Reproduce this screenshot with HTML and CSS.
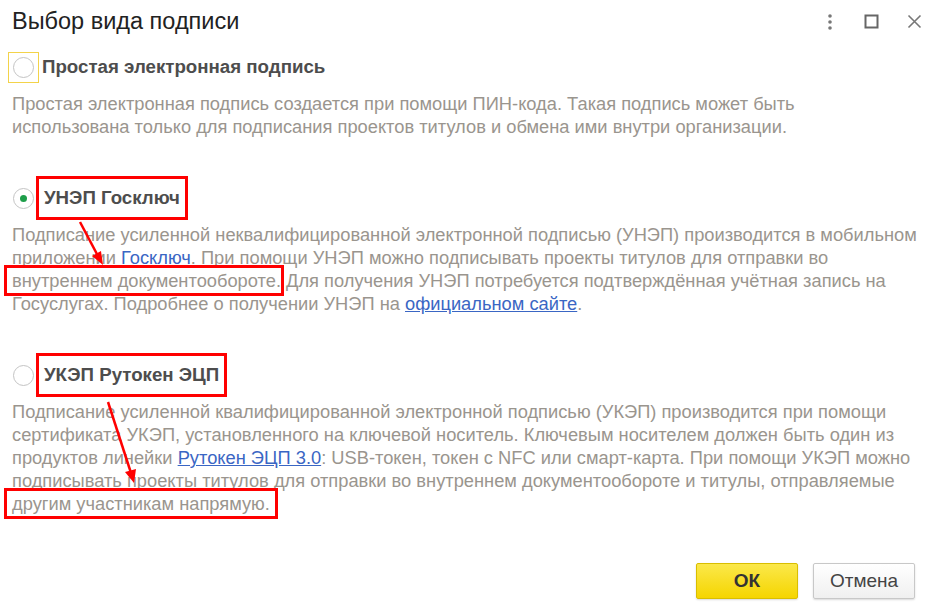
FILE: index.html
```html
<!DOCTYPE html>
<html lang="ru">
<head>
    <meta charset="UTF-8">
    <meta name="viewport" content="width=device-width, initial-scale=1.0">
    <title>Выбор вида подписи</title>
    <link rel="stylesheet" href="styles.css">
</head>
<body>
    <div class="ventana">
        <header class="cabecera">
            <h1 class="titulo">Выбор вида подписи</h1>
            <div class="iconos">
                <svg width="14" height="16" viewBox="0 0 14 16"><circle cx="7" cy="2" r="1.8" fill="#777"/><circle cx="7" cy="8" r="1.8" fill="#777"/><circle cx="7" cy="14" r="1.8" fill="#777"/></svg>
                <svg width="16" height="16" viewBox="0 0 16 16"><rect x="1.5" y="1.5" width="12" height="12" fill="none" stroke="#666" stroke-width="2"/></svg>
                <svg width="16" height="16" viewBox="0 0 16 16"><path d="M1.5 1.5 L13.5 13.5 M13.5 1.5 L1.5 13.5" stroke="#777" stroke-width="1.6"/></svg>
            </div>
        </header>

        <main class="opciones">
            <section class="opcion">
                <div class="fila">
                    <span class="foco"><span class="radio"></span></span>
                    <span class="etiqueta">Простая электронная подпись</span>
                </div>
                <p class="descripcion descripcion_corta">Простая электронная подпись создается при помощи ПИН-кода. Такая подпись может быть использована только для подписания проектов титулов и обмена ими внутри организации.</p>
            </section>

            <section class="opcion">
                <div class="fila">
                    <span class="foco sin_foco"><span class="radio marcado"></span></span>
                    <span class="etiqueta marca_caja">УНЭП Госключ</span>
                </div>
                <p class="descripcion">Подписание усиленной неквалифицированной электронной подписью (УНЭП) производится в мобильном приложении <a href="#">Госключ</a>. При помощи УНЭП можно подписывать проекты титулов для отправки во <span class="marca_texto">внутреннем документообороте</span>. Для получения УНЭП потребуется подтверждённая учётная запись на Госуслугах. Подробнее о получении УНЭП на <a href="#">официальном сайте</a>.</p>
            </section>

            <section class="opcion">
                <div class="fila">
                    <span class="foco sin_foco"><span class="radio"></span></span>
                    <span class="etiqueta marca_caja">УКЭП Рутокен ЭЦП</span>
                </div>
                <p class="descripcion">Подписание усиленной квалифицированной электронной подписью (УКЭП) производится при помощи сертификата УКЭП, установленного на ключевой носитель. Ключевым носителем должен быть один из продуктов линейки <a href="#">Рутокен ЭЦП 3.0</a>: USB-токен, токен с NFC или смарт-карта. При помощи УКЭП можно подписывать проекты титулов для отправки во внутреннем документообороте и титулы, отправляемые <span class="marca_texto">другим участникам напрямую.</span></p>
            </section>
        </main>

        <footer class="pie">
            <button class="boton boton_ok">ОК</button>
            <button class="boton">Отмена</button>
        </footer>

        <!-- flechas de la anotación -->
        <svg class="flechas" width="937" height="606" viewBox="0 0 937 606">
            <path d="M80 222 L98 256" stroke="#f00" stroke-width="2.5"/>
            <polygon points="103,265 92,256 101,251" fill="#f00"/>
            <path d="M108 402 L131 473" stroke="#f00" stroke-width="2.5"/>
            <polygon points="134,483 125,472 136,469" fill="#f00"/>
        </svg>
    </div>
</body>
</html>
```

FILE: styles.css
```css
*{
    box-sizing: border-box;
}
body{
    margin: 0;
    background-color: #fff;
    font-family: "Liberation Sans", Arial, sans-serif;
}
.ventana{
    position: relative;
    height: 606px;
    display: flex;
    flex-direction: column;
    overflow: hidden;
}
.cabecera{
    display: flex;
    justify-content: space-between;
    align-items: flex-start;
    padding: 6px 14px 0 12px;
    height: 51px;
}
.titulo{
    margin: 0;
    font-size: 23.5px;
    font-weight: normal;
    line-height: 30px;
    color: #222;
}
.iconos{
    display: flex;
    gap: 27px;
    padding-top: 8px;
}
.opciones{
    padding: 0 12px;
    display: flex;
    flex-direction: column;
    gap: 44px;
}
.fila{
    display: flex;
    align-items: center;
    height: 32px;
    margin-left: -4px;
}
.foco{
    width: 31px;
    height: 31px;
    border: 1.5px solid #f3d34a;
    display: flex;
    align-items: center;
    justify-content: center;
    margin-right: 3px;
}
.sin_foco{
    border-color: transparent;
}
.radio{
    width: 21px;
    height: 21px;
    border-radius: 50%;
    border: 1.5px solid #c4c4c4;
    display: flex;
    align-items: center;
    justify-content: center;
}
.marcado::after{
    content: "";
    width: 7px;
    height: 7px;
    border-radius: 50%;
    background-color: #1e9e4a;
}
.etiqueta{
    font-size: 18.7px;
    font-weight: bold;
    color: #4d4d4d;
}
.marca_caja{
    padding: 8px 5px;
    outline: 3px solid #f00;
    margin-left: -3px;
}
.descripcion{
    margin: 9px 0 0 0;
    font-size: 18.3px;
    line-height: 23px;
    color: #9a958e;
}
.descripcion_corta{
    max-width: 880px;
}
.descripcion a{
    color: #3a66c4;
}
.marca_texto{
    padding: 2px 5px;
    margin: 0 -5px;
    outline: 3px solid #f00;
}
.pie{
    margin-top: auto;
    display: flex;
    justify-content: flex-end;
    gap: 15px;
    padding: 0 22px 7px 0;
}
.boton{
    width: 102px;
    height: 36px;
    border: 1px solid #c8c8c8;
    border-radius: 2px;
    background: linear-gradient(#fff, #f0f0f0);
    font-family: "Liberation Sans", Arial, sans-serif;
    font-size: 19px;
    color: #444;
    box-shadow: 0 1px 2px rgba(0,0,0,0.15);
}
.boton_ok{
    background: linear-gradient(#fbe84a, #f5d500);
    border-color: #d9be00;
    font-weight: bold;
    color: #333;
}
.flechas{
    position: absolute;
    left: 0;
    top: 0;
    pointer-events: none;
}
```
